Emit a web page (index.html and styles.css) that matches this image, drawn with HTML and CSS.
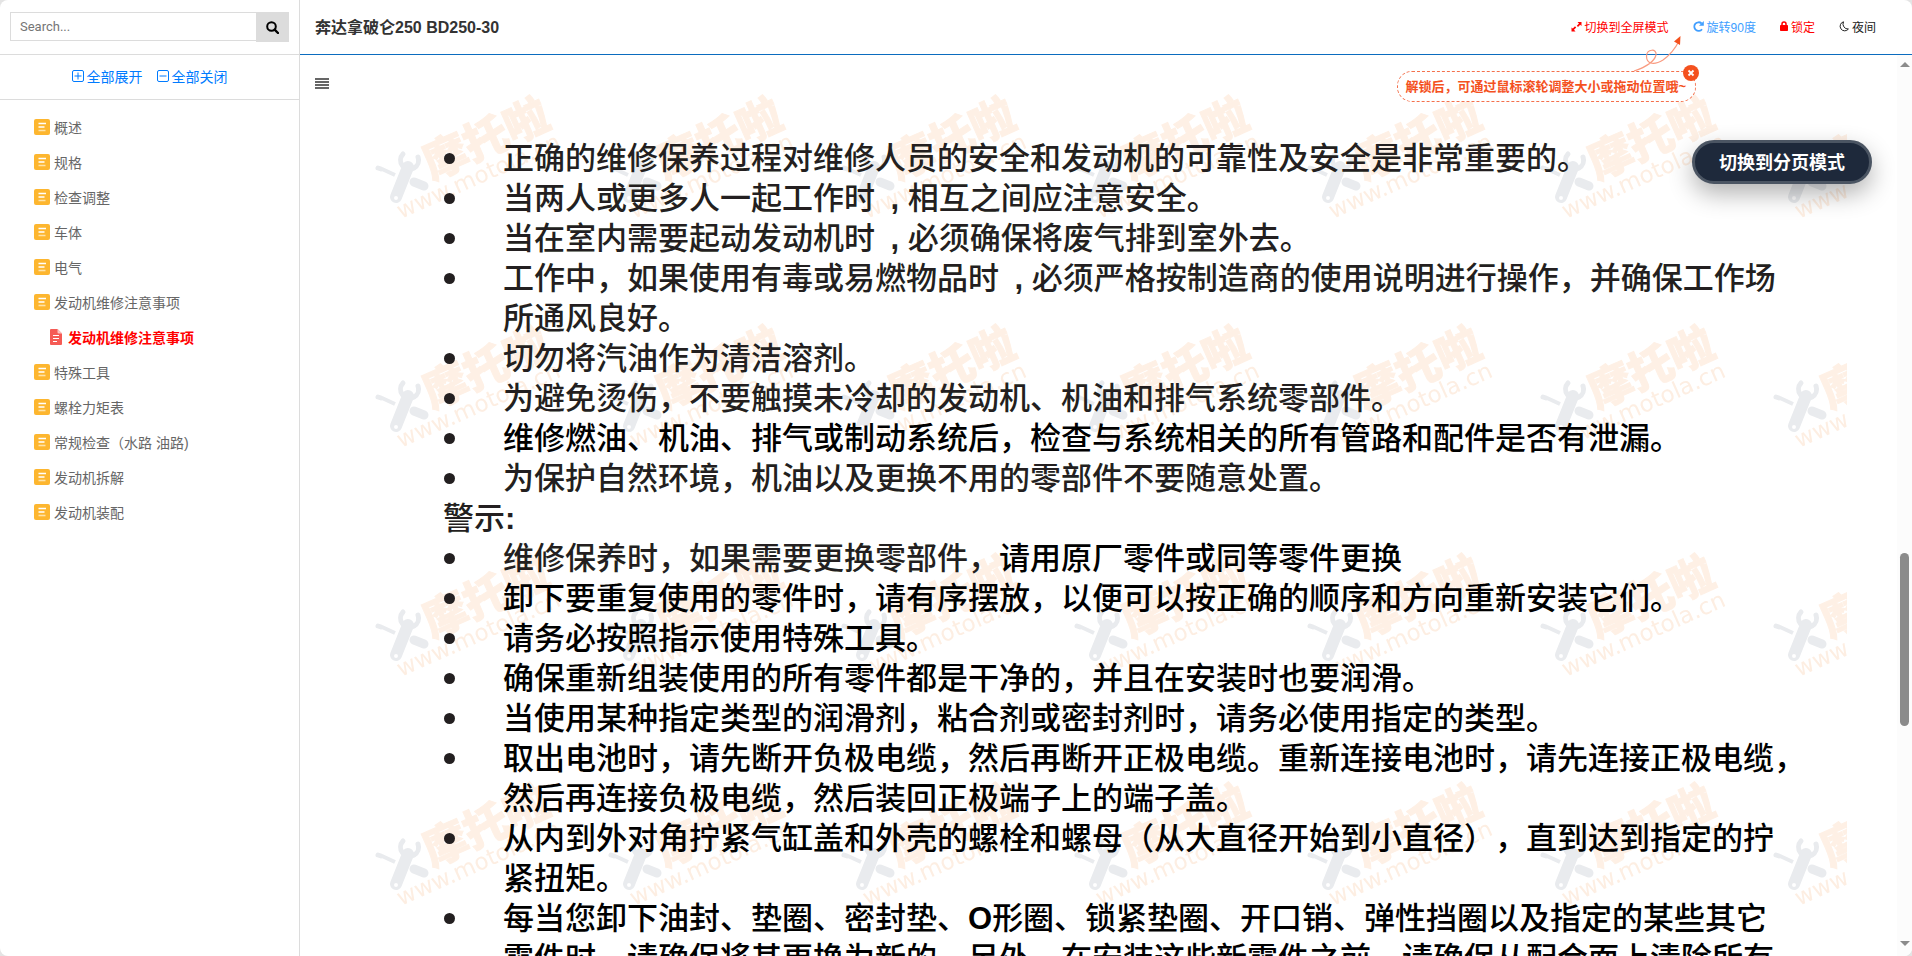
FILE: index.html
```html
<!DOCTYPE html>
<html lang="zh-CN">
<head>
    <meta charset="UTF-8">
    <meta name="viewport" content="width=device-width, initial-scale=1.0">
    <title>奔达拿破仑250 BD250-30</title>
    <link rel="stylesheet" href="styles.css">
</head>
<body>
    <!-- shared icons -->
    <svg class="sprite" aria-hidden="true">
        <symbol id="icon-folder" viewBox="0 0 16 16">
            <rect x="0" y="0" width="16" height="16" rx="2" fill="#fdb62f"/>
            <path d="M4.500 4.500H12M4.500 8H10.500" stroke="#fff" stroke-width="1.300"/>
            <path d="M4.500 11.500H11.500" stroke="#ffe3a8" stroke-width="1.600"/>
        </symbol>
        <symbol id="icon-file" viewBox="0 0 12 16">
            <path d="M1 0H7.500L12 4.500V15a1 1 0 0 1-1 1H1a1 1 0 0 1-1-1V1a1 1 0 0 1 1-1z" fill="#f55b55"/>
            <path d="M7.500 0L12 4.500H8.500a1 1 0 0 1-1-1z" fill="#fbc3c0"/>
            <path d="M3 6.500H9M3 9.500H9M3 12.500H7" stroke="#fff" stroke-width="1.200"/>
        </symbol>
    </svg>

    <div class="app">
        <aside class="sidebar">
            <form class="search">
                <input type="text" placeholder="Search..." aria-label="Search">
                <button type="button" aria-label="搜索">
                    <svg width="13" height="13" viewBox="0 0 13 13" fill="none" stroke="#000" stroke-width="2">
                        <circle cx="5.500" cy="5.500" r="4.300"/>
                        <path d="M8.600 8.600L12 12" stroke-width="2.400" stroke-linecap="round"/>
                    </svg>
                </button>
            </form>
            <div class="toggle">
                <a href="#">
                    <svg width="12" height="12" viewBox="0 0 12 12" fill="none" stroke="#007bff">
                        <rect x=".5" y=".5" width="11" height="11" rx="1.500"/>
                        <path d="M2.500 6H9.500M6 2.500V9.500"/>
                    </svg>
                    <span>全部展开</span>
                </a>
                <a href="#">
                    <svg width="12" height="12" viewBox="0 0 12 12" fill="none" stroke="#007bff">
                        <rect x=".5" y=".5" width="11" height="11" rx="1.500"/>
                        <path d="M2.500 6H9.500"/>
                    </svg>
                    <span>全部关闭</span>
                </a>
            </div>
            <ul class="tree">
                <li><a href="#"><svg width="16" height="16"><use href="#icon-folder"/></svg>概述</a></li>
                <li><a href="#"><svg width="16" height="16"><use href="#icon-folder"/></svg>规格</a></li>
                <li><a href="#"><svg width="16" height="16"><use href="#icon-folder"/></svg>检查调整</a></li>
                <li><a href="#"><svg width="16" height="16"><use href="#icon-folder"/></svg>车体</a></li>
                <li><a href="#"><svg width="16" height="16"><use href="#icon-folder"/></svg>电气</a></li>
                <li>
                    <a href="#"><svg width="16" height="16"><use href="#icon-folder"/></svg>发动机维修注意事项</a>
                    <ul>
                        <li><a class="active" href="#"><svg width="12" height="16"><use href="#icon-file"/></svg>发动机维修注意事项</a></li>
                    </ul>
                </li>
                <li><a href="#"><svg width="16" height="16"><use href="#icon-folder"/></svg>特殊工具</a></li>
                <li><a href="#"><svg width="16" height="16"><use href="#icon-folder"/></svg>螺栓力矩表</a></li>
                <li><a href="#"><svg width="16" height="16"><use href="#icon-folder"/></svg>常规检查（水路 油路)</a></li>
                <li><a href="#"><svg width="16" height="16"><use href="#icon-folder"/></svg>发动机拆解</a></li>
                <li><a href="#"><svg width="16" height="16"><use href="#icon-folder"/></svg>发动机装配</a></li>
            </ul>
        </aside>

        <main class="main">
            <header class="topbar">
                <h1>奔达拿破仑250 BD250-30</h1>
                <nav class="tools">
                    <a class="red" href="#">
                        <svg width="11" height="11" viewBox="0 0 11 11" fill="#f00">
                            <path d="M6.500 1H10.500V5L9.200 3.700L7 5.900L5.800 4.700L8 2.500zM.5 6.500L1.800 7.500L4 5.300L5.200 6.500L3 8.700L4.500 10.500H.5z"/>
                        </svg>
                        <span>切换到全屏模式</span>
                    </a>
                    <a class="blue" href="#">
                        <svg width="11" height="11" viewBox="0 0 11 11" fill="none" stroke="#409eff" stroke-width="1.800">
                            <path d="M9 8.200A4.300 4.300 0 1 1 8.600 2.500"/>
                            <path d="M10.800 0V4.800H6z" fill="#409eff" stroke="none"/>
                        </svg>
                        <span>旋转90度</span>
                    </a>
                    <a class="red" href="#">
                        <svg width="8" height="10" viewBox="0 0 8 10" fill="#f00">
                            <rect y="4" width="8" height="6" rx=".8"/>
                            <path d="M2 4.500V3a2 2 0 0 1 4 0V4.500" fill="none" stroke="#f00" stroke-width="1.500"/>
                        </svg>
                        <span>锁定</span>
                    </a>
                    <a href="#">
                        <svg width="10" height="11" viewBox="0 0 10 11" fill="none" stroke="#222">
                            <path d="M4.500 .8A4.600 4.600 0 1 0 9.400 8A5 5 0 0 1 4.500 .8z"/>
                        </svg>
                        <span>夜间</span>
                    </a>
                </nav>
            </header>

            <div class="tip">
                <svg class="tip-arrow" width="50" height="36" viewBox="0 0 50 36" fill="none" stroke="#f99b80" stroke-width="1.200">
                    <path d="M1 35C10 32 21 27 23 19C24 12 14 13 13.500 20C13.500 29 22 29 30 24C37 19 42 13 46 5"/>
                    <path d="M47.500 0L47 9L41 5.500z" fill="#f4511e" stroke="none"/>
                </svg>
                <p>解锁后，可通过鼠标滚轮调整大小或拖动位置哦~</p>
                <button type="button" class="tip-close" aria-label="关闭">
                    <svg width="16" height="16" viewBox="0 0 16 16">
                        <circle cx="8" cy="8" r="8" fill="#f4511e"/>
                        <path d="M5.500 5.500L10.500 10.500M10.500 5.500L5.500 10.500" stroke="#fff" stroke-width="1.800"/>
                    </svg>
                </button>
            </div>

            <button type="button" class="menu" aria-label="目录">
                <svg width="14" height="12" viewBox="0 0 14 12" fill="#666">
                    <path d="M0 0h14v2H0zM0 3h14v2H0zM0 6h14v2H0zM0 9h14v2H0z"/>
                </svg>
            </button>
            <button type="button" class="mode">切换到分页模式</button>

            <div class="viewer">
                <article class="page">
                    <svg class="watermark" width="100%" height="100%" aria-hidden="true">
                        <defs>
                            <pattern id="mark" x="20" y="26" width="233" height="229" patternUnits="userSpaceOnUse">
                                <!-- wrench over a screwdriver -->
                                <g fill="none" stroke="#e9ebee" stroke-linecap="round">
                                    <path d="M33 73A9 9 0 1 0 48 76" stroke-width="5"/>
                                    <path d="M38 86L26 116" stroke-width="12"/>
                                    <path d="M8 87L11 88" stroke-width="5"/>
                                    <path d="M12 88L25 94" stroke-width="4" stroke-linecap="butt"/>
                                    <path d="M44 101L54 105" stroke-width="9"/>
                                </g>
                                <circle cx="26" cy="117" r="2" fill="#fff"/>
                                <text class="mark-name" transform="translate(62 99) rotate(-24)">摩托啦</text>
                                <text class="mark-url" transform="translate(31 138) rotate(-24)">www.motola.cn</text>
                            </pattern>
                        </defs>
                        <rect width="100%" height="100%" fill="url(#mark)"/>
                    </svg>
                    <div class="text">
                        <ul>
                            <li>正确的维修保养过程对维修人员的安全和发动机的可靠性及安全是非常重要的。</li>
                            <li>当两人或更多人一起工作时<span class="comma">&ensp;, </span>相互之间应注意安全。</li>
                            <li>当在室内需要起动发动机时<span class="comma">&ensp;, </span>必须确保将废气排到室外去。</li>
                            <li>工作中，如果使用有毒或易燃物品时<span class="comma">&ensp;, </span>必须严格按制造商的使用说明进行操作，并确保工作场<br>所通风良好。</li>
                            <li>切勿将汽油作为清洁溶剂。</li>
                            <li>为避免烫伤，不要触摸未冷却的发动机、机油和排气系统零部件。</li>
                            <li class="dark">维修燃油、机油、排气或制动系统后，检查与系统相关的所有管路和配件是否有泄漏。</li>
                            <li>为保护自然环境，机油以及更换不用的零部件不要随意处置。</li>
                        </ul>
                        <h2>警示<b>:</b></h2>
                        <ul>
                            <li>维修保养时，如果需要更换零部件，<span class="dark">请用原厂零件或同等零件更换</span></li>
                            <li class="dark">卸下要重复使用的零件时，请有序摆放，以便可以按正确的顺序和方向重新安装它们。</li>
                            <li class="dark">请务必按照指示使用特殊工具。</li>
                            <li class="dark">确保重新组装使用的所有零件都是干净的，并且在安装时也要润滑。</li>
                            <li class="dark">当使用某种指定类型的润滑剂，粘合剂或密封剂时，请务必使用指定的类型。</li>
                            <li class="dark">取出电池时，请先断开负极电缆，然后再断开正极电缆。重新连接电池时，请先连接正极电缆，<br>然后再连接负极电缆，然后装回正极端子上的端子盖。</li>
                            <li class="dark">从内到外对角拧紧气缸盖和外壳的螺栓和螺母（从大直径开始到小直径），直到达到指定的拧<br>紧扭矩。</li>
                            <li class="dark">每当您卸下油封、垫圈、密封垫、<b>O</b>形圈、锁紧垫圈、开口销、弹性挡圈以及指定的某些其它<br>零件时，请确保将其更换为新的。另外，在安装这些新零件之前，请确保从配合面上清除所有</li>
                        </ul>
                    </div>
                </article>
                <div class="scrollbar">
                    <span class="up"></span>
                    <div class="track"><div class="thumb"></div></div>
                    <span class="down"></span>
                </div>
            </div>
        </main>
    </div>
</body>
</html>
```

FILE: styles.css
```css
*{
    margin: 0;
    padding: 0;
    box-sizing: border-box;
}

body{
    background-color: #e4e4e4;
    font-family: "Liberation Sans", "Noto Sans CJK SC", sans-serif;
    font-size: 14px;
    color: #222;
}

a{
    color: inherit;
    text-decoration: none;
}

ul{
    list-style: none;
}

button{
    border: none;
    background: none;
    font-family: inherit;
    cursor: pointer;
}

svg{
    display: block;
    flex-shrink: 0;
}

.sprite{
    position: absolute;
    width: 0;
    height: 0;
}

.app{
    display: flex;
    height: 100vh;
    background-color: #fff;
    border-radius: 8px;
    overflow: hidden;
}

/* sidebar */
.sidebar{
    flex: 0 0 300px;
    border-right: 1px solid #dcdcdc;
}

.search{
    display: flex;
    height: 55px;
    padding: 12px 10px;
    border-bottom: 1px solid #dcdcdc;
}

.search input{
    flex: 1;
    min-width: 0;
    height: 29px;
    padding: 0 9px;
    border: 1px solid #dcdcdc;
    border-right: none;
    font-family: Roboto, sans-serif;
    font-size: 13px;
    outline: none;
}

.search input::placeholder{
    color: #757575;
}

.search button{
    display: flex;
    align-items: center;
    justify-content: center;
    width: 33px;
    height: 30px;
    background-color: #dcdcdc;
}

.toggle{
    display: flex;
    justify-content: center;
    gap: 14px;
    height: 45px;
    padding-bottom: 2px;
    border-bottom: 1px solid #dcdcdc;
    color: #007bff;
}

.toggle a{
    display: flex;
    align-items: center;
    gap: 3px;
}

.tree{
    padding: 9px 0 0 34px;
}

.tree ul{
    padding-left: 16px;
}

.tree a{
    display: flex;
    align-items: center;
    gap: 4px;
    height: 35px;
    color: #666;
}

.tree .active{
    gap: 6px;
    color: #f00;
    font-weight: bold;
}

/* main column */
.main{
    position: relative;
    display: flex;
    flex-direction: column;
    flex: 1;
    min-width: 0;
}

.topbar{
    display: flex;
    align-items: center;
    justify-content: space-between;
    height: 55px;
    padding: 0 36px 2px 15px;
    border-bottom: 1px solid #0b6cbf;
}

.topbar h1{
    font-size: 16px;
    color: #333;
}

.tools{
    display: flex;
    gap: 24px;
    font-size: 12px;
}

.tools a{
    display: flex;
    align-items: center;
    gap: 3px;
}

.tools .red{
    color: #f00;
}

.tools .blue{
    color: #409eff;
}

.tip{
    position: absolute;
    z-index: 2;
    top: 71px;
    right: 216px;
    height: 31px;
    padding: 0 9px 0 7px;
    border: 1px dashed #f4714d;
    border-radius: 15px;
    background-color: #fff;
    color: #f4511e;
    font-size: 13px;
    font-weight: bold;
    line-height: 29px;
}

.tip-arrow{
    position: absolute;
    right: 12px;
    bottom: 29px;
}

.tip-close{
    position: absolute;
    top: -7px;
    right: -4px;
}

.menu{
    position: absolute;
    z-index: 2;
    top: 78px;
    left: 15px;
}

.mode{
    position: absolute;
    z-index: 2;
    top: 140px;
    right: 40px;
    height: 44px;
    padding: 0 24px 2px;
    border: 3px solid #4b5563;
    border-radius: 22px;
    background-color: #1e293b;
    box-shadow: 0 10px 25px rgba(0, 0, 0, 0.3);
    color: #fff;
    font-size: 18px;
    font-weight: bold;
}

/* document */
.viewer{
    display: flex;
    flex: 1;
    min-height: 0;
}

.page{
    position: relative;
    flex: 1;
    min-width: 0;
    margin: 0 50px;
    overflow: hidden;
}

.watermark{
    position: absolute;
    top: 0;
    left: 0;
}

.mark-name{
    font-family: "Noto Sans CJK SC", sans-serif;
    font-size: 44px;
    font-weight: 900;
    fill: #fef0e5;
    stroke: #fef0e5;
    stroke-width: 1px;
}

.mark-url{
    font-family: "DejaVu Sans", sans-serif;
    font-size: 23px;
    fill: #fdeee2;
}

.text{
    position: relative;
    padding: 81px 0 0 93px;
    font-family: "Noto Sans CJK SC", sans-serif;
    font-size: 31px;
    font-weight: 500;
    line-height: 40px;
    color: #231f20;
    white-space: nowrap;
    text-spacing-trim: space-all;
}

.text h2{
    font-size: 31px;
    font-weight: 500;
}

.text b{
    font-family: "Liberation Sans", sans-serif;
    line-height: 1;
}

.text li{
    position: relative;
    padding-left: 60px;
}

.text li::before{
    content: "";
    position: absolute;
    top: 17px;
    left: 1px;
    width: 11px;
    height: 11px;
    border-radius: 50%;
    background-color: #231f20;
}

.dark{
    color: #000;
}

.comma{
    font-family: "Liberation Sans", sans-serif;
    font-weight: bold;
    line-height: 1;
}

.scrollbar{
    display: flex;
    flex-direction: column;
    align-items: center;
    width: 15px;
    padding: 7px 0 10px;
    background-color: #fcfcfc;
}

.track{
    flex: 1;
    display: flex;
    flex-direction: column;
    justify-content: flex-end;
    padding-bottom: 215px;
}

.thumb{
    width: 9px;
    height: 173px;
    border-radius: 5px;
    background-color: #8b8b8b;
}

.up,
.down{
    border: 5px solid transparent;
}

.up{
    border-top: none;
    border-bottom-color: #8b8b8b;
}

.down{
    border-bottom: none;
    border-top-color: #8b8b8b;
}
```
